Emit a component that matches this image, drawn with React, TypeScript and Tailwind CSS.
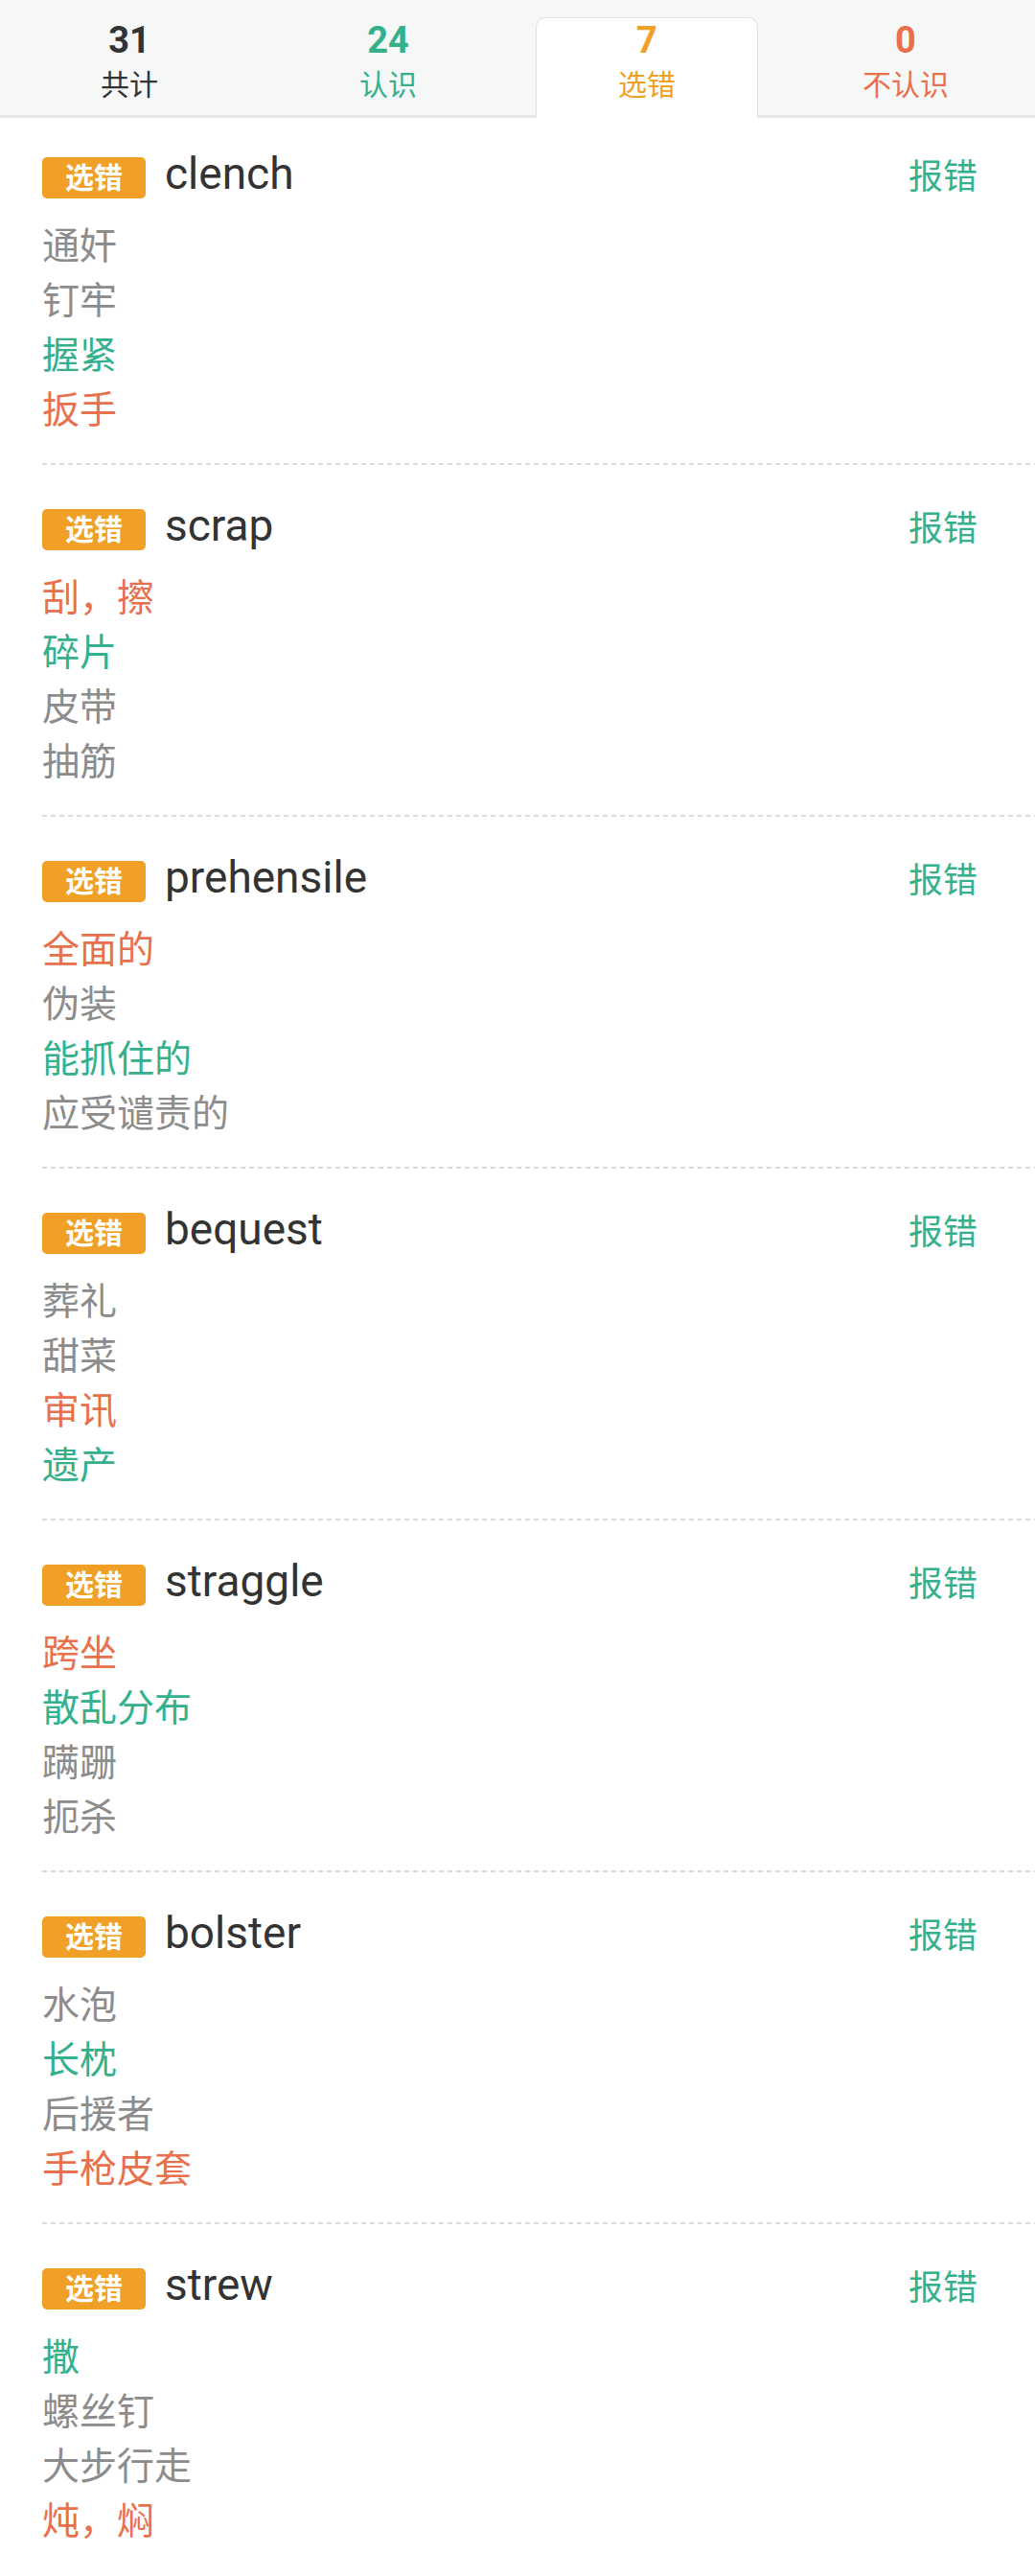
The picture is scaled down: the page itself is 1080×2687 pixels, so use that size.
const GREEN = "text-[#35b08c]";

type Tone = "grey" | "green" | "red";

const toneClass: Record<Tone, string> = {
  grey: "text-[#8c8c8c]",
  green: "text-[#35b08c]",
  red: "text-[#e8704c]",
};

const words: { word: string; options: [string, Tone][] }[] = [
  { word: "clench", options: [["通奸", "grey"], ["钉牢", "grey"], ["握紧", "green"], ["扳手", "red"]] },
  { word: "scrap", options: [["刮，擦", "red"], ["碎片", "green"], ["皮带", "grey"], ["抽筋", "grey"]] },
  { word: "prehensile", options: [["全面的", "red"], ["伪装", "grey"], ["能抓住的", "green"], ["应受谴责的", "grey"]] },
  { word: "bequest", options: [["葬礼", "grey"], ["甜菜", "grey"], ["审讯", "red"], ["遗产", "green"]] },
  { word: "straggle", options: [["跨坐", "red"], ["散乱分布", "green"], ["蹒跚", "grey"], ["扼杀", "grey"]] },
  { word: "bolster", options: [["水泡", "grey"], ["长枕", "green"], ["后援者", "grey"], ["手枪皮套", "red"]] },
  { word: "strew", options: [["撒", "green"], ["螺丝钉", "grey"], ["大步行走", "grey"], ["炖，焖", "red"]] },
];

const tabs = [
  { count: "31", label: "共计", color: "text-[#333333]", active: false },
  { count: "24", label: "认识", color: GREEN, active: false },
  { count: "7", label: "选错", color: "text-[#f0a026]", active: true },
  { count: "0", label: "不认识", color: "text-[#e8704c]", active: false },
];

function Tabs() {
  return (
    <div className="flex h-[123px] bg-[#f6f7f7] border-b-[3px] border-[#e6e6e6]">
      {tabs.map((t) => (
        <div key={t.label} className="flex-1 px-[19px] pt-[18px]">
          <div
            className={
              t.active
                ? "h-[105px] pt-[4px] bg-white rounded-t-[10px] border border-b-0 border-[#e2e2e2] flex flex-col items-center"
                : "h-[102px] pt-[4px] border border-transparent flex flex-col items-center"
            }
          >
            <div className={`text-[38px] leading-[38px] font-bold ${t.color}`}>{t.count}</div>
            <div className={`mt-[10px] text-[30px] leading-[36px] ${t.color}`}>{t.label}</div>
          </div>
        </div>
      ))}
    </div>
  );
}

function WordCard({ word, options, first, last }: { word: string; options: [string, Tone][]; first: boolean; last: boolean }) {
  return (
    <div className={first ? "ml-[44px] pt-[41px]" : "ml-[44px] pt-[46px]"}>
      <div className="flex items-center h-[43px] pr-[60px]">
        <span className="w-[108px] h-[43px] rounded-[5px] bg-[#f0a026] text-white text-[30px] font-bold leading-[43px] text-center">
          选错
        </span>
        <span className="ml-[20px] mb-[10px] text-[46px] leading-[54px] text-[#333333]">{word}</span>
        <span className={`ml-auto text-[36px] leading-[43px] ${GREEN}`}>报错</span>
      </div>
      <div className="mt-[22px] pb-[26px] flex flex-col">
        {options.map(([text, tone]) => (
          <div key={text} className={`text-[39px] leading-[57px] ${toneClass[tone]}`}>
            {text}
          </div>
        ))}
      </div>
      {!last && (
        <div className="h-[2px] bg-[repeating-linear-gradient(to_right,#dadada_0px,#dadada_5px,transparent_5px,transparent_9px)]" />
      )}
    </div>
  );
}

export default function App() {
  return (
    <div className="w-[1080px] min-h-[2687px] bg-white font-['Roboto','Noto_Sans_CJK_SC',sans-serif]">
      <Tabs />
      {words.map((w, i) => (
        <WordCard
          key={w.word}
          word={w.word}
          options={w.options}
          first={i === 0}
          last={i === words.length - 1}
        />
      ))}
    </div>
  );
}
